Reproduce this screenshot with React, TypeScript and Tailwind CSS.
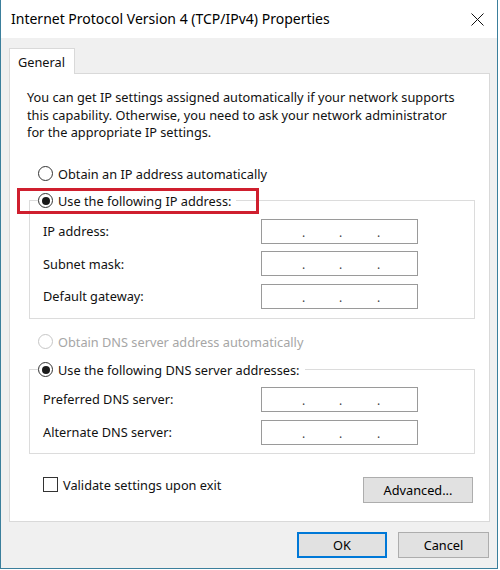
import React from "react";

const font = { fontFamily: '"Segoe UI", "Noto Sans", "Open Sans", sans-serif' };

function Radio({ checked, disabled }: { checked?: boolean; disabled?: boolean }) {
  return (
    <span
      className={
        "flex h-[15px] w-[15px] shrink-0 items-center justify-center rounded-full border bg-white " +
        (disabled ? "border-[#c6c6c6]" : "border-[#333333]")
      }
    >
      {checked && <span className="h-[8px] w-[8px] rounded-full bg-[#1a1a1a]" />}
    </span>
  );
}

function IpBox() {
  return (
    <div className="flex h-[25px] w-[157px] items-end border border-[#9a9a9a] bg-white pb-[4px] pl-[40px] text-[12px] leading-none text-[#444]">
      <span className="w-[37px]">.</span>
      <span className="w-[38px]">.</span>
      <span>.</span>
    </div>
  );
}

function Field({ label }: { label: string }) {
  return (
    <div className="flex items-center justify-between pl-[13px] pr-[56px]">
      <span>{label}</span>
      <IpBox />
    </div>
  );
}

function Button({ children, primary, className = "" }: { children: React.ReactNode; primary?: boolean; className?: string }) {
  return (
    <button
      className={
        "flex items-center justify-center bg-[#e1e1e1] text-[12.75px] text-black " +
        (primary ? "border-2 border-[#0078d7] " : "border border-[#adadad] ") +
        className
      }
    >
      {children}
    </button>
  );
}

export default function App() {
  return (
    <div
      className="flex h-[569px] w-[498px] flex-col border-x border-b border-[#3b7f9c] bg-[#f0f0f0] text-[12.75px] leading-[16px] text-[#111]"
      style={font}
    >
      {/* Title bar */}
      <div className="flex h-[38px] shrink-0 items-center justify-between bg-white pl-[10px] pr-[12px]">
        <span className="text-[14px] text-black">Internet Protocol Version 4 (TCP/IPv4) Properties</span>
        <svg width="13" height="13" viewBox="0 0 13 13" className="mr-[1px]">
          <path d="M0.5 0.5 L12.5 12.5 M12.5 0.5 L0.5 12.5" stroke="#111" strokeWidth="1" fill="none" />
        </svg>
      </div>

      <div className="flex flex-1 flex-col px-[8px] pt-[10px]">
        {/* Tab */}
        <div className="relative z-10 -mb-px flex h-[26px] w-[66px] items-center border-x border-t border-[#d9d9d9] bg-white pl-[8px]">
          General
        </div>

        {/* Tab panel */}
        <div className="flex h-[449px] w-[481px] flex-col border border-[#d9d9d9] bg-white pt-[15px]">
          <p className="pl-[17px] pr-[10px] leading-[17.5px]">
            You can get IP settings assigned automatically if your network supports
            <br />
            this capability. Otherwise, you need to ask your network administrator
            <br />
            for the appropriate IP settings.
          </p>

          <div className="mt-[22px] flex h-[20px] items-center gap-[5px] pl-[28px]">
            <Radio />
            <span>Obtain an IP address automatically</span>
          </div>

          <fieldset className="ml-[19px] mr-[14px] mt-[7px] border border-[#dcdcdc] pb-[9px]">
            <legend className="relative ml-[8px] flex h-[20px] items-center gap-[5px] pr-[5px]">
              <Radio checked />
              <span>Use the following IP address:</span>
              <span className="pointer-events-none absolute -left-[21px] -right-[23px] -top-[3px] -bottom-[3px] border-[3px] border-[#cf1f2e]" />
            </legend>
            <div className="flex flex-col gap-[7.5px] pt-[8px]">
              <Field label="IP address:" />
              <Field label="Subnet mask:" />
              <Field label="Default gateway:" />
            </div>
          </fieldset>

          <div className="mt-[13px] flex h-[20px] items-center gap-[5px] pl-[28px] text-[#a6a6a6]">
            <Radio disabled />
            <span>Obtain DNS server address automatically</span>
          </div>

          <fieldset className="ml-[19px] mr-[14px] mt-[8px] border border-[#dcdcdc] pb-[8px]">
            <legend className="ml-[8px] flex h-[20px] items-center gap-[5px] pr-[5px]">
              <Radio checked />
              <span>Use the following DNS server addresses:</span>
            </legend>
            <div className="flex flex-col gap-[8px] pt-[7px]">
              <Field label="Preferred DNS server:" />
              <Field label="Alternate DNS server:" />
            </div>
          </fieldset>

          <div className="mt-[22px] flex items-start justify-between pl-[33px] pr-[16px]">
            <div className="flex items-center gap-[5px] pt-px">
              <span className="h-[15px] w-[15px] border border-[#333333] bg-white" />
              <span>Validate settings upon exit</span>
            </div>
            <Button className="mt-px h-[26px] w-[110px]">Advanced...</Button>
          </div>
        </div>

        {/* Footer buttons */}
        <div className="mt-[10px] flex justify-end gap-[11px]">
          <Button primary className="h-[26px] w-[90px]">OK</Button>
          <Button className="h-[26px] w-[91px]">Cancel</Button>
        </div>
      </div>
    </div>
  );
}
